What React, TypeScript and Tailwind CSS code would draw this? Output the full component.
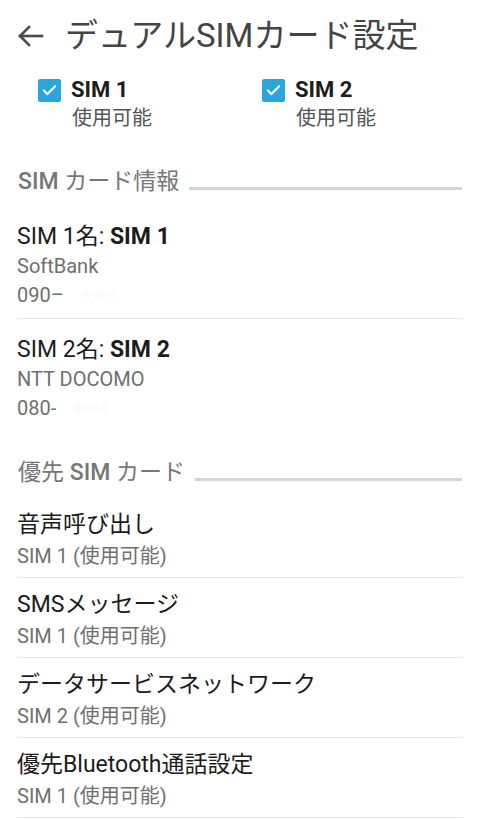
import { Check } from "lucide-react";

const FONT = "font-['Roboto','Noto_Sans_CJK_JP',sans-serif]";

const PREFS = [
  { title: "音声呼び出し", sub: "SIM 1 (使用可能)" },
  { title: "SMSメッセージ", sub: "SIM 1 (使用可能)" },
  { title: "データサービスネットワーク", sub: "SIM 2 (使用可能)" },
  { title: "優先Bluetooth通話設定", sub: "SIM 1 (使用可能)" },
];

function BackArrow() {
  return (
    <svg width="28" height="24" viewBox="0 0 28 24" fill="none" stroke="#4a4a4a" strokeWidth="2.6" strokeLinecap="square">
      <path d="M3 12h22" />
      <path d="M12 3l-9 9 9 9" />
    </svg>
  );
}

function SimCheck({ label }: { label: string }) {
  return (
    <div className="flex flex-col">
      <div className="flex items-center gap-[10px] h-[24px]">
        <span className="flex h-[23px] w-[23px] items-center justify-center rounded-[2px] bg-[#2aa6de]">
          <Check className="h-[17px] w-[17px] text-white" strokeWidth={3} />
        </span>
        <span className="text-[22px] font-bold leading-[24px] text-[#1c1c1c]">{label}</span>
      </div>
      <span className="ml-[34px] mt-[2px] text-[20px] leading-[28px] text-[#555]">使用可能</span>
    </div>
  );
}

function SectionHeader({ label }: { label: React.ReactNode }) {
  return (
    <div className="flex items-end gap-[10px] px-[18px]">
      <span className="text-[23px] leading-[28px] text-[#777] whitespace-nowrap">{label}</span>
      <span className="mb-[6px] h-[3px] flex-1 bg-[#d4d4d4]" />
    </div>
  );
}

function SimInfo({ n, carrier, prefix, last }: { n: string; carrier: string; prefix: string; last?: boolean }) {
  return (
    <div className={`mx-[17px] pt-[16px] pb-[8px] ${last ? "" : "border-b border-[#e6e6e6]"}`}>
      <div className="text-[23px] leading-[30px] text-[#1c1c1c]">
        SIM {n}名: <span className="font-bold">SIM {n}</span>
      </div>
      <div className="text-[20px] leading-[29px] text-[#6f6f6f]">{carrier}</div>
      <div className="text-[20px] leading-[29px] text-[#6f6f6f]">
        {prefix}
        <span className="ml-[20px] blur-[2px] text-[#d0d0d0]">· ·· ·</span>
      </div>
    </div>
  );
}

export default function App() {
  return (
    <div className={`${FONT} w-[480px] h-[819px] overflow-hidden bg-white`}>
      <div className="flex h-[72px] items-center pl-[17px]">
        <BackArrow />
        <h1 className="ml-[20px] text-[33px] leading-[40px] text-[#444]">デュアルSIMカード設定</h1>
      </div>

      <div className="grid grid-cols-[224px_1fr] pl-[38px] pt-[6px]">
        <SimCheck label="SIM 1" />
        <SimCheck label="SIM 2" />
      </div>

      <div className="mt-[36px]">
        <SectionHeader label={<><span className="font-medium">SIM</span> カード情報</>} />
      </div>
      <div className="mt-[10px]">
        <SimInfo n="1" carrier="SoftBank" prefix="090–" />
        <SimInfo n="2" carrier="NTT DOCOMO" prefix="080-" last />
      </div>

      <div className="mt-[28px]">
        <SectionHeader label={<>優先 <span className="font-medium">SIM</span> カード</>} />
      </div>
      <div className="mt-[11px]">
        {PREFS.map((p) => (
          <div key={p.title} className="mx-[17px] border-b border-[#e6e6e6] pt-[12px] pb-[7px]">
            <div className="text-[23px] leading-[30px] text-[#1c1c1c]">{p.title}</div>
            <div className="mt-[2px] text-[20px] leading-[28px] text-[#707070]">{p.sub}</div>
          </div>
        ))}
      </div>
    </div>
  );
}
